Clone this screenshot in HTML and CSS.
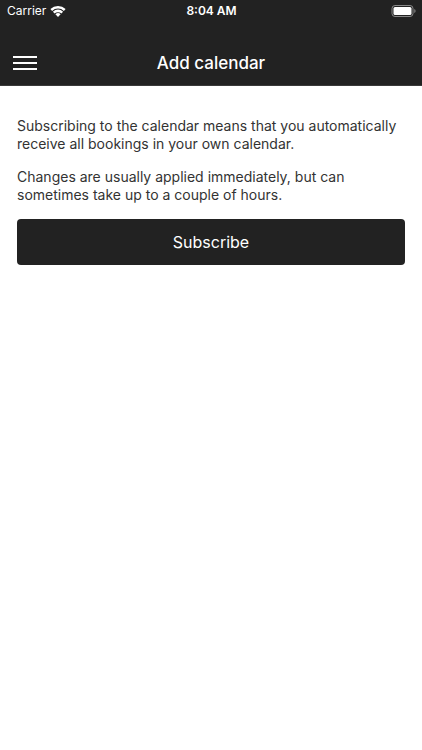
FILE: index.html
```html
<!DOCTYPE html>
<html lang="en">
<head>
<meta charset="utf-8">
<meta name="viewport" content="width=device-width, initial-scale=1">
<title>Add calendar</title>
<link rel="stylesheet" href="styles.css">
</head>
<body>
<header class="header">
  <div class="status">
    <div class="carrier">
      <span>Carrier</span>
      <svg class="wifi" viewBox="0 0 16 12" aria-hidden="true">
        <path d="M.4 4.100a11 11 0 0 1 15.200 0L13.900 5.900a8.600 8.600 0 0 0-11.800 0z"/>
        <path d="M2.900 6.700a7.300 7.300 0 0 1 10.200 0L11.400 8.500a4.900 4.900 0 0 0-6.800 0z"/>
        <path d="M5.400 9.300a3.700 3.700 0 0 1 5.200 0L8 12z"/>
      </svg>
    </div>
    <time class="clock">8:04 AM</time>
    <svg class="battery" viewBox="0 0 25 12" aria-hidden="true">
      <rect class="battery-shell" x="1" y=".500" width="21" height="11" rx="3"/>
      <rect class="battery-fill" x="2.500" y="2" width="18" height="8" rx="1.500"/>
      <path class="battery-tip" d="M23.300 4a2.200 2.200 0 0 1 0 4z"/>
    </svg>
  </div>
  <div class="navbar">
    <button class="menu" type="button" aria-label="Menu">
      <svg class="menu-icon" viewBox="0 0 24 16" aria-hidden="true"><path d="M0 2h24M0 8h24M0 14h24"/></svg>
    </button>
    <h1 class="title">Add calendar</h1>
  </div>
</header>
<main class="content">
  <p class="text">Subscribing to the calendar means that you automatically receive all bookings in your own calendar.</p>
  <p class="text">Changes are usually applied immediately, but can sometimes take up to a couple of hours.</p>
  <button class="subscribe" type="button">Subscribe</button>
</main>
</body>
</html>
```
FILE: styles.css
```css
* { box-sizing: border-box; }
body {
  margin: 0;
  background: #fff;
  color: #333;
  font-family: Inter, "Liberation Sans", sans-serif;
}
.header { border-bottom: 1px solid #3a3a3a; background: #222; color: #fff; }
.status {
  display: grid;
  grid-template-columns: 1fr auto 1fr;
  align-items: center;
  height: 21px;
  padding: 0 6px 0 7px;
  font-size: 12px;
}
.carrier { display: flex; align-items: center; gap: 4px; }
.wifi { width: 16px; height: 12px; fill: #fff; }
.clock { font-weight: 600; }
.battery { justify-self: end; width: 25px; height: 12px; }
.battery-shell { fill: none; stroke: #888; }
.battery-fill { fill: #fff; }
.battery-tip { fill: #888; }
.navbar {
  display: grid;
  grid-template-columns: 1fr auto 1fr;
  align-items: center;
  height: 64px;
  padding: 20px 13px 0;
}
.menu {
  justify-self: start;
  display: flex;
  padding: 0;
  border: 0;
  background: none;
}
.menu-icon { width: 24px; height: 16px; fill: none; stroke: #fff; stroke-width: 2; }
.title { margin: 0; font-size: 17px; font-weight: 500; line-height: 24px; }
.content { padding: 31px 17px; }
.text { margin: 0 0 15px; font-size: 14px; line-height: 18px; }
.subscribe {
  display: block;
  width: 100%;
  height: 46px;
  border: 0;
  border-radius: 4px;
  background: #222;
  color: #fff;
  font: 400 16px Inter, "Liberation Sans", sans-serif;
}
```
